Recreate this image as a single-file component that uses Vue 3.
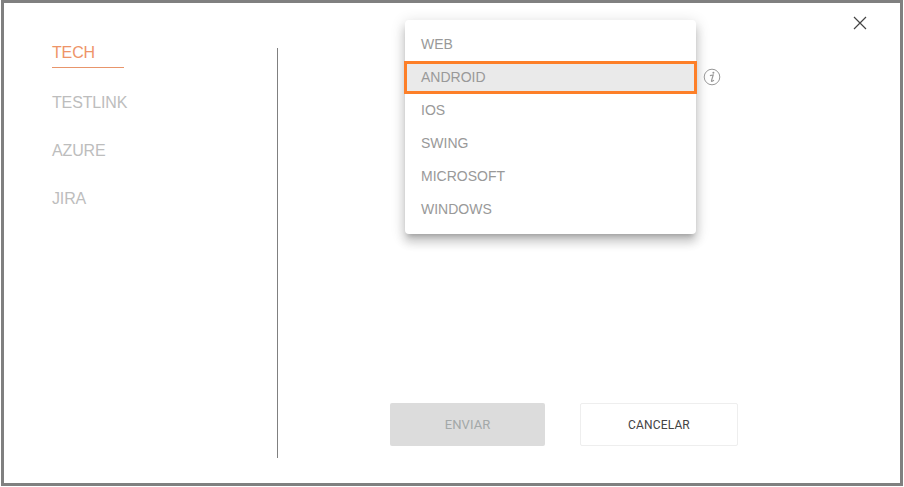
<template>
  <section class="dialog">
    <button class="close" aria-label="Fechar">
      <svg width="14" height="14" viewBox="0 0 14 14">
        <path d="M1 1L13 13M13 1L1 13" stroke="#444" stroke-width="1.2" fill="none" />
      </svg>
    </button>
    <nav class="tabs">
      <a v-for="tab in tabs" :key="tab" class="tab" :class="{ active: tab === 'TECH' }">{{ tab }}</a>
    </nav>
    <div class="divider"></div>
    <main class="content">
      <div class="select-row">
        <ul class="menu">
          <li v-for="opt in options" :key="opt" class="option" :class="{ selected: opt === 'ANDROID' }">{{ opt }}</li>
        </ul>
        <svg class="info" width="18" height="18" viewBox="0 0 18 18">
          <circle cx="9" cy="9" r="7.8" stroke="#999" stroke-width="1" fill="none" />
          <path d="M6.9 7.7L10.2 7L8.5 12.6Q8.3 13.6 9.2 13.3L11 12.3" stroke="#999" stroke-width="1.2" fill="none" />
          <circle cx="10.4" cy="4.7" r="1" fill="#999" />
        </svg>
      </div>
      <div class="actions">
        <button class="btn send" disabled>ENVIAR</button>
        <button class="btn cancel">CANCELAR</button>
      </div>
    </main>
  </section>
</template>

<script setup>
const tabs = ['TECH', 'TESTLINK', 'AZURE', 'JIRA']
const options = ['WEB', 'ANDROID', 'IOS', 'SWING', 'MICROSOFT', 'WINDOWS']
</script>

<style>
html, body {
  background: #fff;
}
</style>

<style scoped>
.dialog {
  position: relative;
  box-sizing: border-box;
  width: 902px;
  height: 486px;
  margin-left: 1px;
  border: 3px solid #808080;
  display: flex;
  background: #fff;
  font-family: "Liberation Sans", Arial, sans-serif;
}
.close {
  position: absolute;
  top: 13px;
  right: 33px;
  width: 14px;
  height: 14px;
  padding: 0;
  border: 0;
  background: none;
  display: flex;
}
.tabs {
  width: 273px;
  flex: none;
  padding: 39px 0 0 48px;
  box-sizing: border-box;
  display: flex;
  flex-direction: column;
  align-items: flex-start;
}
.tab {
  width: 72px;
  height: 26px;
  margin-bottom: 22px;
  font-size: 16px;
  line-height: 20px;
  letter-spacing: -.15px;
  color: #bdbdbd;
}
.tab.active {
  color: #ee9468;
  border-bottom: 1px solid #e8956b;
  height: 24px;
  padding-top: 1px;
  margin-bottom: 25px;
}
.divider {
  width: 1px;
  height: 410px;
  margin-top: 45px;
  background: #808080;
}
.content {
  flex: 1;
  display: flex;
  flex-direction: column;
  padding: 17px 0 0 127px;
  box-sizing: border-box;
}
.select-row {
  display: flex;
  align-items: flex-start;
  height: 383px;
}
.menu {
  width: 291px;
  height: 214px;
  margin: 0;
  padding: 8px 0;
  box-sizing: border-box;
  list-style: none;
  background: #fff;
  border-radius: 4px;
  box-shadow: 0 5px 5px -3px rgba(0, 0, 0, .2), 0 8px 10px 1px rgba(0, 0, 0, .14), 0 3px 14px 2px rgba(0, 0, 0, .12);
}
.option {
  height: 33px;
  line-height: 33px;
  padding-left: 16px;
  font-size: 14px;
  color: #999;
}
.option.selected {
  margin: 0 -1px;
  padding-left: 14px;
  box-sizing: border-box;
  background: #eaeaea;
  border: 3px solid #fd7f28;
  line-height: 27px;
}
.info {
  margin: 48px 0 0 7px;
}
.actions {
  display: flex;
  gap: 35px;
  margin-left: -15px;
}
.btn {
  height: 43px;
  border-radius: 2px;
  font-family: Roboto, sans-serif;
  font-size: 12px;
}
.send {
  width: 155px;
  border: 0;
  background: #dcdcdc;
  color: #a3a8a8;
  font-size: 13px;
  letter-spacing: .1px;
}
.cancel {
  width: 158px;
  background: #fff;
  border: 1px solid #eee;
  color: #444;
  letter-spacing: .15px;
}
</style>
